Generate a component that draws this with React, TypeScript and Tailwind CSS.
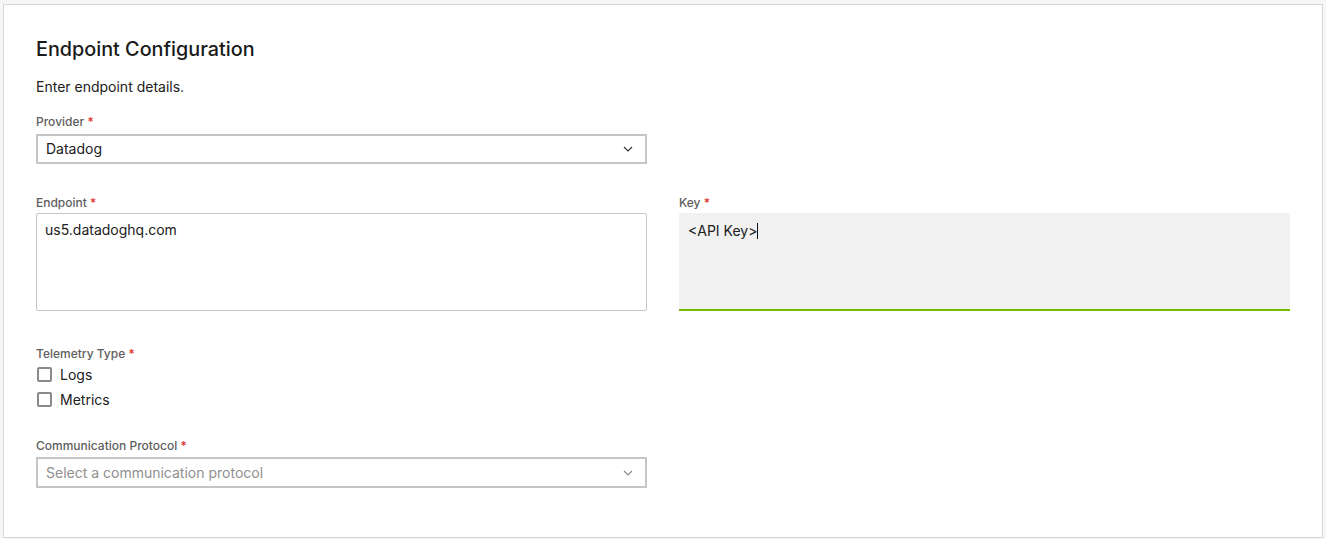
function Chevron({ light }: { light?: boolean }) {
  return (
    <svg width="10" height="6" viewBox="0 0 10 6" fill="none" className="mr-[12px]">
      <path d="M1 1l4 4 4-4" stroke={light ? '#8a8a8a' : '#333333'} strokeWidth="1.2" />
    </svg>
  );
}

function Label({ text }: { text: string }) {
  return (
    <div className="text-[12px] leading-4 font-medium text-[#5e5e5e]">
      {text} <span className="text-[#e0322b]">*</span>
    </div>
  );
}

function Check({ label }: { label: string }) {
  return (
    <div className="flex h-[25px] items-center gap-[8px]">
      <span className="ml-[1px] h-[15px] w-[15px] rounded-[2px] border-2 border-[#8a8a8a] bg-white" />
      <span className="text-sm text-[#202020]">{label}</span>
    </div>
  );
}

export default function App() {
  return (
    <div className="h-[539px] w-[1326px] overflow-hidden bg-[#f6f6f6] pt-[4px] pl-[3px]" style={{ fontFamily: 'Inter, "Noto Sans", sans-serif' }}>
      <div className="h-[534px] w-[1320px] border border-[#d6d6d6] bg-white px-[32px] pt-[32px]">
        <h1 className="text-[19.8px] leading-6 font-medium text-[#1a1a1a]">Endpoint Configuration</h1>
        <p className="mt-[16px] text-sm leading-5 text-[#202020]">Enter endpoint details.</p>

        <div className="mt-[17px] w-[611px]">
          <Label text="Provider" />
          <div className="mt-[4px] flex h-[30px] items-center justify-between border-2 border-[#c6c6c6] pl-[8px]">
            <span className="text-sm text-[#202020]">Datadog</span>
            <Chevron />
          </div>
        </div>

        <div className="mt-[31px] grid grid-cols-2 gap-x-[32px]">
          <div>
            <Label text="Endpoint" />
            <div className="mt-[2px] h-[98px] rounded-[2px] border border-[#c6c6c6] px-[8px] pt-[6px] text-sm text-[#202020]">
              us5.datadoghq.com
            </div>
          </div>
          <div>
            <Label text="Key" />
            <div className="mt-[2px] h-[98px] rounded-t-[2px] border-b-2 border-[#76b900] bg-[#f1f1f1] px-[9px] pt-[7px] text-sm text-[#202020]">
              &lt;API Key&gt;<span className="inline-block h-[16px] w-px translate-y-[3px] bg-[#111]" />
            </div>
          </div>
        </div>

        <div className="mt-[35px]">
          <Label text="Telemetry Type" />
          <Check label="Logs" />
          <Check label="Metrics" />
        </div>

        <div className="mt-[26px] w-[611px]">
          <Label text="Communication Protocol" />
          <div className="mt-[3px] flex h-[31px] items-center justify-between border-2 border-[#c6c6c6] pl-[8px]">
            <span className="text-sm text-[#8f8f8f]">Select a communication protocol</span>
            <Chevron light />
          </div>
        </div>
      </div>
    </div>
  );
}
